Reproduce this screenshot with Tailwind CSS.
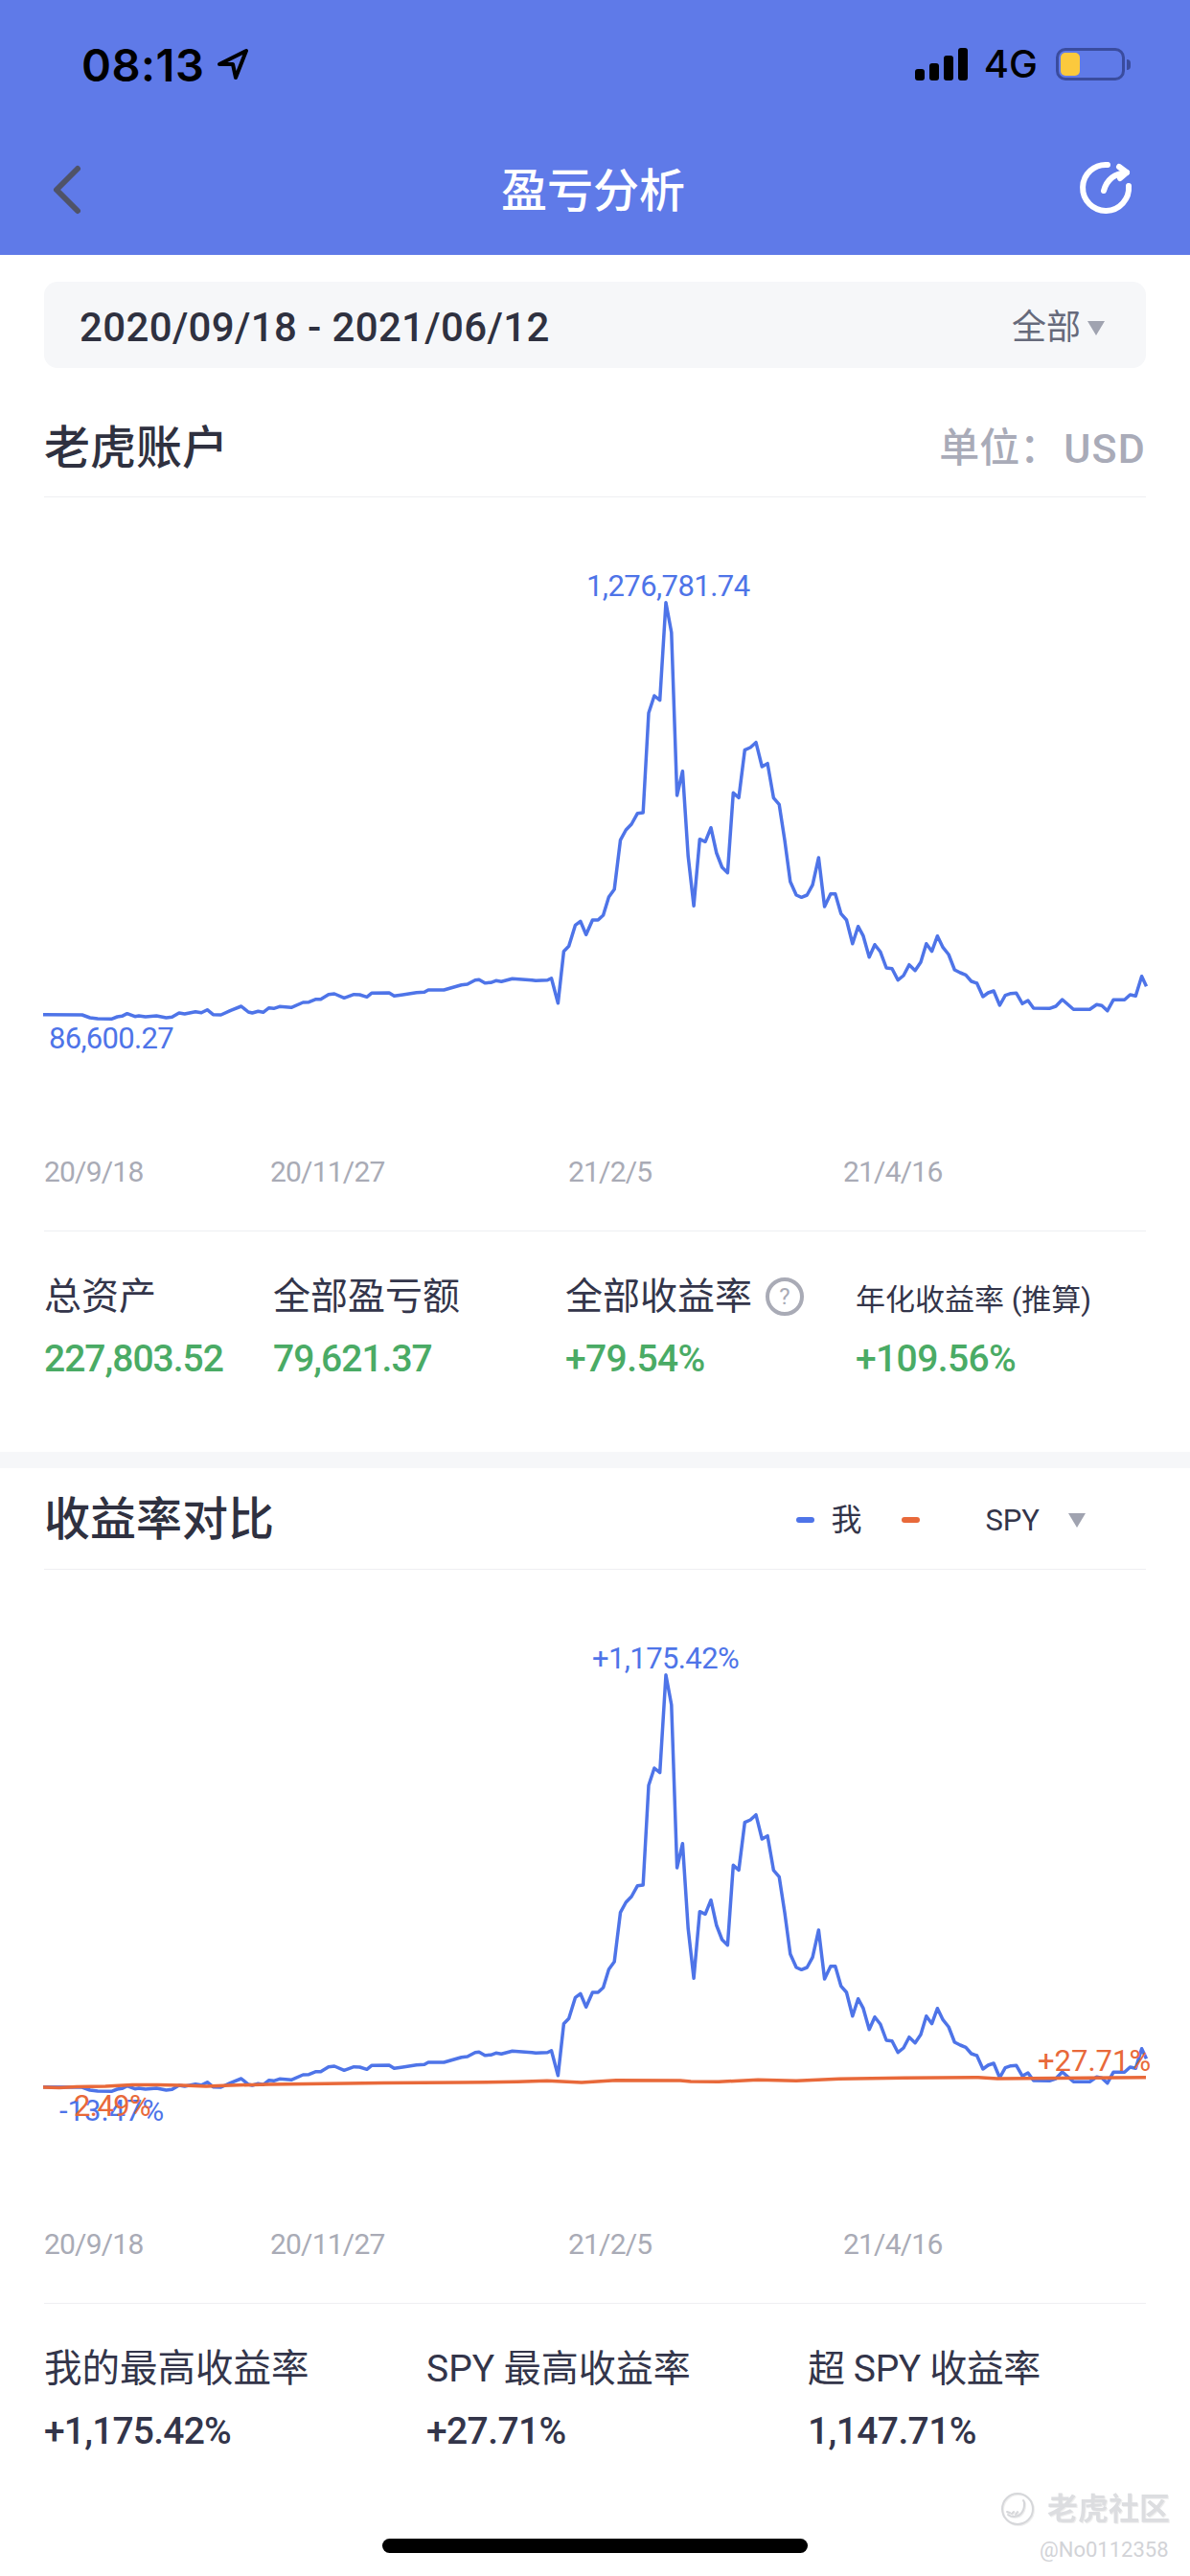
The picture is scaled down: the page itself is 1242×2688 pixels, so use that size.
<!DOCTYPE html>
<html lang="zh-CN">

<head>
  <meta charset="UTF-8">
  <meta name="viewport" content="width=device-width, initial-scale=1.0">
  <title>盈亏分析</title>
  <script src="https://cdn.jsdelivr.net/npm/@tailwindcss/browser@4"></script>
</head>

<body class="relative w-[1242px] h-[2688px] overflow-hidden bg-white text-[#2f3140] font-['Roboto','Noto_Sans_CJK_SC',sans-serif]">

  <!-- header -->
  <header class="h-[266px] bg-[#5f7ae8]">
    <div class="h-[134px] flex items-center justify-between pl-[85px] pr-[62px] text-black font-['Inter',sans-serif]">
      <div class="flex items-center gap-[13px]">
        <span class="text-[47px] leading-none font-semibold tracking-[0.5px]">08:13</span>
        <svg width="34" height="34" viewBox="0 0 34 34" fill="none" stroke="#000" stroke-width="4" stroke-linejoin="round">
          <path d="M3 17 L31 3 L20 31 L17 17 Z" />
        </svg>
      </div>
      <div class="flex items-center">
        <div class="flex items-end gap-[5px] h-[34px]">
          <span class="w-[10px] h-[12px] rounded-[3px] bg-black"></span>
          <span class="w-[10px] h-[18px] rounded-[3px] bg-black"></span>
          <span class="w-[10px] h-[26px] rounded-[3px] bg-black"></span>
          <span class="w-[10px] h-[34px] rounded-[3px] bg-black"></span>
        </div>
        <span class="ml-[17px] text-[40px] leading-none font-medium">4G</span>
        <div class="ml-[19px] w-[72px] h-[34px] rounded-[10px] border-[3px] border-[#3a4c9e] p-[2px]">
          <div class="w-[20px] h-full rounded-[5px] bg-[#fbc93d]"></div>
        </div>
        <span class="ml-[2px] w-[4px] h-[11px] rounded-r-[4px] bg-[#3a4c9e]"></span>
      </div>
    </div>
    <div class="relative h-[128px] flex items-center justify-center">
      <svg class="absolute left-[50px] top-[35px]" width="40" height="58" viewBox="0 0 40 58" fill="none" stroke="#4f5368" stroke-width="6" stroke-linecap="round" stroke-linejoin="round">
        <path d="M31 7 L9 29 L31 51" />
      </svg>
      <h1 class="pt-[3px] text-[48px] leading-none font-medium text-white -translate-x-[2px]">盈亏分析</h1>
      <svg class="absolute left-[1111px] top-[26px]" width="90" height="75" viewBox="0 0 90 75" fill="none" stroke="#fff" stroke-width="6" stroke-linecap="round" stroke-linejoin="round">
        <path d="M45 12 A24 24 0 1 0 67 34" />
        <path d="M41 39 C44 28 52 21 65 20" />
        <path d="M57 14 L65 20 L58 26" />
      </svg>
    </div>
  </header>

  <!-- date filter -->
  <div class="mx-[46px] mt-[28px] h-[90px] pt-[5px] flex items-center justify-between pl-[37px] pr-[42px] rounded-[14px] bg-[#f6f7f9]">
    <span class="text-[42px] leading-none font-medium tracking-[0.35px]">2020/09/18 - 2021/06/12</span>
    <div class="flex items-center gap-[6px] text-[#666a7b]">
      <span class="text-[36px] leading-none">全部</span>
      <svg width="20" height="16" viewBox="0 0 20 16"><path d="M1 1 H19 L10 16 Z" fill="#a0a3b0" /></svg>
    </div>
  </div>

  <!-- account section -->
  <section>
    <div class="mx-[46px] h-[135px] pt-[34px] flex items-center justify-between border-b border-[#eeeff2]">
      <h2 class="text-[48px] leading-none font-medium">老虎账户</h2>
      <div class="flex items-center gap-[4px] font-medium text-[#a9abb8] leading-none">
        <span class="text-[42px]">单位：</span>
        <span class="text-[43px] tracking-[1.2px]">USD</span>
      </div>
    </div>

    <div class="relative h-[680px]">
      <svg class="block" width="1242" height="680" viewBox="0 519 1242 680" fill="none">
        <polyline id="equity-curve" stroke="#4e74e8" stroke-width="3.5" stroke-linejoin="round" points="45,1058.7 85.7,1059 93.9,1062 102,1063 116.3,1063.3 122.4,1061 127.3,1060.3 132.7,1057.7 140.8,1060.7 144.9,1060 151.8,1061 163.3,1060 173.5,1062 179.6,1061.3 186.9,1057 192.7,1058 204,1055.7 210.2,1056.7 216.3,1053.7 222.4,1058.7 230.6,1059 240.8,1054.3 251.8,1050 259.2,1056 263.3,1057 269.4,1055.3 274.7,1056.3 280.8,1051.7 285.7,1052.3 291.8,1050.3 304,1051.3 316.3,1046 322.4,1045.7 329.8,1042.7 334.7,1042.7 342.9,1037.7 349,1037 359.2,1041.3 369.4,1037.7 375.5,1038 382.9,1040.3 387.8,1036.3 406.1,1036 411.4,1039.3 420.4,1038 434.7,1035.7 442.9,1035.3 447,1033 463.3,1033 481.6,1027.7 487.8,1027 495.9,1022.7 500,1022.3 506.1,1025.7 512.2,1025.3 517.6,1023.3 523.3,1024.3 534.7,1021.3 555.1,1022.7 559.2,1023.3 571.4,1022.7 575.5,1020.7 582.4,1046.7 588.4,992.7 593.7,987.3 600.5,965.3 605.8,961.3 611.7,975.3 618.4,960 624.2,960 629.6,955 635.4,936 641.2,928 647.5,876.7 653.3,866 659.1,860 665.4,848.7 671.2,848 677,744 682.9,726 688.7,730.7 695,628.7 700.8,660 706.6,830 712.4,804.7 718.2,893.3 724.1,945.3 730.3,875.7 736.1,878.3 742,863.7 747.8,890 753.6,905 759.4,910.7 765.3,827.3 771.1,832.3 777.3,782.7 783.2,780 789,774.7 795.3,800 801.1,796.7 807.4,832.7 813.2,839.3 819,876.7 824.8,920 831.1,934 836.5,936.3 842.3,934 848.1,923.3 854.4,895 860.6,946 866.9,932.7 871.8,932.7 877.7,953.3 883.5,960 889.8,984.7 895.6,966.7 901,976.7 907.2,998.7 913,985.7 918.9,993.3 925.1,1010 931,1010.7 937.2,1022.7 943,1018 948.9,1006.7 955.1,1012.7 961,1004 966.8,984.7 972.6,992.7 978.4,976.7 984.2,988.7 990.1,996 996.3,1012 1002.2,1015 1008,1017.3 1013.8,1024 1019.6,1026 1025.9,1040 1031.3,1036 1037.1,1034 1043.4,1049 1049.2,1038.7 1055,1036.7 1060.8,1036.3 1067.1,1047.3 1072.9,1044 1078.7,1052 1095.3,1052.3 1102,1050 1108.7,1043 1120.4,1053.3 1137.4,1053.3 1144.6,1048.3 1149.9,1049.3 1155.8,1054.7 1162,1043.3 1173.7,1043.3 1179.5,1038 1185.3,1039.3 1191.6,1018.7 1196.5,1029.3" />
      </svg>
      <span class="absolute left-[612px] top-[78px] text-[31px] leading-[30px] text-[#4e74e8] tracking-[-0.55px]">1,276,781.74</span>
      <span class="absolute left-[51px] top-[550px] text-[31px] leading-[30px] text-[#4e74e8] tracking-[-0.7px]">86,600.27</span>
    </div>
    <div class="px-[46px] h-[48px] grid grid-cols-[236px_311px_287px_1fr] items-center text-[30px] leading-none text-[#a9abb6] tracking-[-0.8px]">
      <span>20/9/18</span><span>20/11/27</span><span>21/2/5</span><span>21/4/16</span>
    </div>
    <div class="mx-[46px] mt-[37px] h-px bg-[#eeeff2]"></div>

    <div class="h-[230px] px-[46px] pt-[43px] grid grid-cols-[239px_305px_303px_1fr] grid-rows-[50px_50px] gap-y-[15px] items-center text-[#33354a]">
      <span class="text-[39px] leading-none">总资产</span>
      <span class="text-[39px] leading-none">全部盈亏额</span>
      <div class="flex items-center gap-[14px]">
        <span class="text-[39px] leading-none">全部收益率</span>
        <span class="w-[40px] h-[40px] rounded-full border-[4px] border-[#a9abb6] flex items-center justify-center text-[24px] leading-none text-[#a9abb6]">?</span>
      </div>
      <span class="text-[31px] leading-none pt-[6px]">年化收益率 (推算)</span>
      <span class="text-[39px] leading-none font-medium text-[#4aab65] tracking-[-1px]">227,803.52</span>
      <span class="text-[39px] leading-none font-medium text-[#4aab65] tracking-[-1px]">79,621.37</span>
      <span class="text-[39px] leading-none font-medium text-[#4aab65] tracking-[-0.6px]">+79.54%</span>
      <span class="text-[39px] leading-none font-medium text-[#4aab65] tracking-[-0.6px]">+109.56%</span>
    </div>
  </section>

  <div class="h-[17px] bg-[#f6f7f9]"></div>

  <!-- return comparison section -->
  <section>
    <div class="relative mx-[46px] h-[106px] pt-[3px] flex items-center border-b border-[#eeeff2]">
      <h2 class="text-[48px] leading-none font-medium">收益率对比</h2>
      <div class="ml-auto mr-[62px] flex items-center text-[#33354a]">
        <span class="w-[19px] h-[6px] rounded-full bg-[#4e74e8]"></span>
        <span class="ml-[17px] text-[32px] leading-none">我</span>
        <span class="ml-[42px] w-[19px] h-[6px] rounded-full bg-[#e8693a]"></span>
        <span class="ml-[68px] text-[31px] leading-none">SPY</span>
        <svg class="ml-[29px]" width="20" height="16" viewBox="0 0 20 16"><path d="M1 1 H19 L10 16 Z" fill="#a0a3b0" /></svg>
      </div>
    </div>

    <div class="relative h-[680px]">
      <svg class="block" width="1242" height="680" viewBox="0 519 1242 680" fill="none">
        <use href="#equity-curve" />
        <polyline stroke="#e8693a" stroke-width="3.5" stroke-linejoin="round" points="45,1059 62,1059.5 80,1058.5 110,1058 138,1056.5 165,1056.5 190,1057 215,1058 240,1057 280,1056 320,1055.5 400,1054.5 480,1054 540,1053.3 571,1052.3 607,1054 643,1051.7 710,1052 721,1053 750,1053.3 791,1051.3 831,1052.3 876,1050.3 943,1049.3 1021,1048.7 1041,1050 1196,1048.7" />
      </svg>
      <span class="absolute left-[618px] top-[78px] text-[31px] leading-[30px] text-[#4e74e8] tracking-[-0.6px]">+1,175.42%</span>
      <span class="absolute left-[62px] top-[550px] text-[31px] leading-[30px] text-[#4e74e8]">-13.47%</span>
      <span class="absolute left-[77px] top-[545px] text-[31px] leading-[30px] text-[#e8693a] tracking-[-0.6px]">2.49%</span>
      <span class="absolute left-[1083px] top-[498px] text-[31px] leading-[30px] text-[#e8693a]">+27.71%</span>
    </div>
    <div class="px-[46px] h-[48px] grid grid-cols-[236px_311px_287px_1fr] items-center text-[30px] leading-none text-[#a9abb6] tracking-[-0.8px]">
      <span>20/9/18</span><span>20/11/27</span><span>21/2/5</span><span>21/4/16</span>
    </div>
    <div class="mx-[46px] mt-[37px] h-px bg-[#eeeff2]"></div>

    <div class="px-[46px] pt-[43px] grid grid-cols-[399px_398px_1fr] grid-rows-[50px_50px] gap-y-[15px] items-center text-[#33354a]">
      <span class="text-[39.5px] leading-none">我的最高收益率</span>
      <span class="text-[39px] leading-none">SPY 最高收益率</span>
      <span class="text-[39px] leading-none tracking-[-0.4px]">超 SPY 收益率</span>
      <span class="text-[39px] leading-none font-medium tracking-[-0.8px]">+1,175.42%</span>
      <span class="text-[39px] leading-none font-medium tracking-[-0.6px]">+27.71%</span>
      <span class="text-[39px] leading-none font-medium tracking-[-0.6px]">1,147.71%</span>
    </div>
  </section>

  <!-- watermark -->
  <div class="absolute left-[1044px] top-[2600px] flex items-center gap-[13px] text-[#dcdde0] drop-shadow-[1px_1px_0_#eeeeee]">
    <svg width="36" height="36" viewBox="0 0 36 36" fill="none" stroke="#d6d7da" stroke-width="2" stroke-linecap="round">
      <circle cx="18" cy="18" r="16" />
      <path d="M8 24 C14 28 21 26 24 19 C25 16 26 12 24 9" />
      <path d="M7 21 L10 22 M12 23 L14 21 M16 24 L18 21" />
    </svg>
    <span class="text-[32px] leading-none font-bold">老虎社区</span>
  </div>
  <span class="absolute left-[1085px] top-[2650px] text-[22px] leading-none text-[#d2d3d7]">@No0112358</span>

  <!-- home indicator -->
  <div class="absolute left-[399px] top-[2649px] w-[444px] h-[15px] rounded-full bg-black"></div>
</body>

</html>
